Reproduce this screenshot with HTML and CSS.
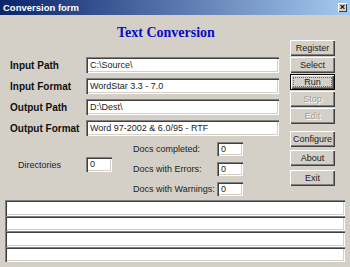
FILE: index.html
```html
<!DOCTYPE html>
<html lang="en">
<head>
  <meta charset="UTF-8">
  <title>Conversion form</title>
  <link rel="stylesheet" href="styles.css">
</head>
<body>

<div class="window">
  <!-- barra de titulo -->
  <div class="titlebar">
    <span class="title">Conversion form</span>
    <span class="close">&times;</span>
  </div>

  <div class="content">
    <div class="main">
      <h1>Text Conversion</h1>

      <div class="fields">
        <label>Input Path</label>
        <div class="field">C:\Source\</div>
        <label>Input Format</label>
        <div class="field">WordStar 3.3 - 7.0</div>
        <label>Output Path</label>
        <div class="field">D:\Dest\</div>
        <label>Output Format</label>
        <div class="field">Word 97-2002 &amp; 6.0/95 - RTF</div>
      </div>

      <div class="stats">
        <div class="dirs">
          <span>Directories</span>
          <div class="field small">0</div>
        </div>
        <div class="docs">
          <span>Docs completed:</span>
          <div class="field small">0</div>
          <span>Docs with Errors:</span>
          <div class="field small">0</div>
          <span>Docs with Warnings:</span>
          <div class="field small">0</div>
        </div>
      </div>
    </div>

    <div class="buttons">
      <button class="btn">Register</button>
      <button class="btn">Select</button>
      <button class="btn default">Run</button>
      <button class="btn" disabled>Stop</button>
      <button class="btn" disabled>Edit</button>
      <button class="btn configure">Configure</button>
      <button class="btn about">About</button>
      <button class="btn exit">Exit</button>
    </div>
  </div>

  <!-- mensajes -->
  <div class="log">
    <div class="field line"></div>
    <div class="field line"></div>
    <div class="field line"></div>
    <div class="field line"></div>
  </div>
</div>

</body>
</html>
```

FILE: styles.css
```css
* { box-sizing: border-box; margin: 0; padding: 0; }

body {
  font-family: "Liberation Sans", Arial, sans-serif;
  background: #d4d0c8;
  color: #000;
}

.window {
  width: 350px;
  height: 267px;
  background: #d4d0c8;
}

/* Barra de titulo */
.titlebar {
  height: 15px;
  display: flex;
  align-items: center;
  justify-content: space-between;
  padding: 0 3px 0 3px;
  background: linear-gradient(to right, #0a246a, #a6caf0);
}

.title {
  color: #fff;
  font-weight: bold;
  font-size: 9.5px;
}

.close {
  width: 9px;
  height: 9px;
  background: #d4d0c8;
  box-shadow: inset 1px 1px #fff, inset -1px -1px #404040;
  font-size: 9px;
  line-height: 8px;
  font-weight: bold;
  text-align: center;
}

.content {
  display: flex;
  height: 185px;
}

.main {
  width: 280px;
}

h1 {
  font-family: "Liberation Serif", "Times New Roman", serif;
  font-size: 14px;
  line-height: 16px;
  color: #0a0ac4;
  padding: 10px 0 0 117px;
}

/* Campos */
.fields {
  display: grid;
  grid-template-columns: 76px 193px;
  row-gap: 5px;
  margin-top: 16px;
  padding-left: 10px;
}

.fields label {
  font-size: 10px;
  font-weight: bold;
  align-self: center;
  color: #111;
}

.field {
  height: 16px;
  background: #fff;
  box-shadow: inset 1px 1px #808080, inset 2px 2px #404040, inset -1px -1px #fff, inset -2px -2px #d4d0c8;
  font-size: 9px;
  line-height: 16px;
  padding-left: 4px;
  white-space: nowrap;
  color: #222;
}

/* Contadores */
.stats {
  display: flex;
  margin-top: 6px;
  font-size: 9px;
  color: #222;
}

.dirs {
  display: flex;
  align-items: center;
  margin-top: 15px;
  padding-left: 18px;
  align-self: flex-start;
}

.dirs span {
  width: 68px;
}

.field.small {
  width: 26px;
  height: 15px;
  line-height: 15px;
}

.docs {
  display: grid;
  grid-template-columns: 84px 26px;
  row-gap: 6px;
  margin-left: 21px;
  align-items: center;
}

.docs .field.small {
  height: 14px;
  line-height: 14px;
}

/* Botones */
.buttons {
  display: flex;
  flex-direction: column;
  gap: 1px;
  width: 45px;
  margin-left: 10px;
  padding-top: 25px;
}

.btn {
  height: 16px;
  border: none;
  background: #d4d0c8;
  font-family: "Liberation Sans", Arial, sans-serif;
  font-size: 9px;
  color: #222;
  box-shadow: inset 1px 1px #fff, inset -1px -1px #404040, inset -2px -2px #808080;
}

.btn.default {
  border: 1px solid #000;
  outline: 1px dotted #666;
  outline-offset: -4px;
}

.btn:disabled {
  color: #a09e96;
  text-shadow: 1px 1px #fff;
}

.btn.configure {
  margin-top: 6px;
}

.btn.about {
  margin-top: 2px;
}

.btn.exit {
  margin-top: 3px;
}

/* Mensajes */
.log {
  padding: 0 5px;
}

.field.line {
  height: 15.5px;
}
```
